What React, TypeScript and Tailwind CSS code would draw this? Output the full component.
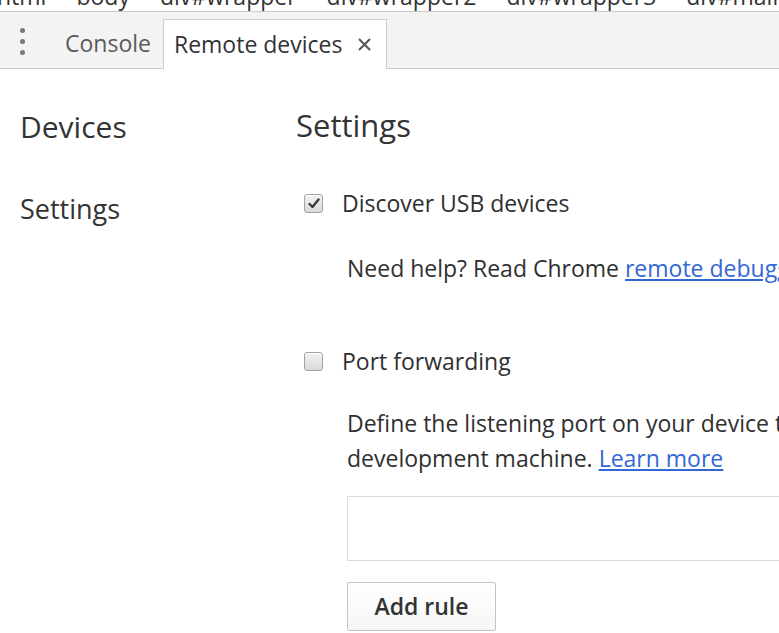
import React from 'react'

function Checkbox({ checked }: { checked?: boolean }) {
  return (
    <span className="flex h-[19px] w-[19px] shrink-0 items-center justify-center rounded-[3px] border border-[#a2a2a2] bg-gradient-to-b from-[#f2f2f2] to-[#dadada] shadow-[inset_0_1px_0_#fff]">
      {checked && (
        <svg width="12" height="11" viewBox="0 0 12 11">
          <path d="M1.5 6 L4.5 9 L10.5 1.5" fill="none" stroke="#3c3c3c" strokeWidth="2.4" strokeLinecap="round" strokeLinejoin="round" />
        </svg>
      )}
    </span>
  )
}

const crumbs = ['html', 'body', 'div#wrapper', 'div#wrapper2', 'div#wrapper3', 'div#main']

export default function App() {
  return (
    <div className="h-[633px] w-[779px] overflow-hidden bg-white font-['Open_Sans','Noto_Sans',sans-serif] text-[#303030]">
      {/* breadcrumb strip, mostly scrolled out of view */}
      <div className="h-[12px] overflow-hidden border-b border-[#c8c8c8]">
        <div className="-ml-[3px] -mt-[15px] flex gap-[30px] whitespace-nowrap text-[23px] leading-[23px] text-[#333]">
          {crumbs.map((c) => (
            <span key={c}>{c}</span>
          ))}
        </div>
      </div>

      {/* tab strip */}
      <div className="flex h-[57px] items-end border-b border-[#cdcdcd] bg-[#f3f3f3]">
        <div className="flex h-full w-[44px] flex-col items-center justify-center gap-[6px] pt-[2px]">
          <span className="h-[5px] w-[5px] rounded-full bg-[#7a7a7a]" />
          <span className="h-[5px] w-[5px] rounded-full bg-[#7a7a7a]" />
          <span className="h-[5px] w-[5px] rounded-full bg-[#7a7a7a]" />
        </div>
        <div className="flex h-[49px] items-center pl-[21px] pr-[12px] text-[23px] text-[#5a5a5a]">Console</div>
        <div className="-mb-px flex h-[50px] w-[224px] items-center border border-b-0 border-[#cdcdcd] bg-white pl-[10px] text-[23px] text-[#333]">
          <span>Remote devices</span>
          <svg className="ml-[15px]" width="15" height="15" viewBox="0 0 15 15">
            <path d="M2 2 L13 13 M13 2 L2 13" stroke="#555" strokeWidth="2" />
          </svg>
        </div>
      </div>

      {/* body */}
      <div className="grid grid-cols-[296px_1fr]">
        <div className="pl-[20px] pt-[40px]">
          <div className="text-[30px] leading-[36px] text-[#333]">Devices</div>
          <div className="mt-[46px] text-[27px] leading-[36px] text-[#333]">Settings</div>
        </div>

        <div className="overflow-hidden pt-[38px]">
          <div className="text-[31px] leading-[36px] text-[#333]">Settings</div>

          <div className="mt-[43px] flex items-center pl-[8px] text-[23px] leading-[35px]">
            <Checkbox checked />
            <span className="ml-[19px]">Discover USB devices</span>
          </div>
          <div className="mt-[30px] whitespace-nowrap pl-[51px] text-[23px] leading-[35px]">
            Need help? Read Chrome{' '}
            <a className="text-[#3367d6] underline">remote debugging documentation.</a>
          </div>

          <div className="mt-[58px] flex items-center pl-[8px] text-[23px] leading-[35px]">
            <Checkbox />
            <span className="ml-[19px]">Port forwarding</span>
          </div>
          <div className="mt-[27px] whitespace-nowrap pl-[51px] text-[23px] leading-[35px]">
            Define the listening port on your device that maps to a port accessible from your
            <br />
            development machine. <a className="text-[#3367d6] underline">Learn more</a>
          </div>

          <div className="ml-[51px] mt-[20px] h-[65px] w-[600px] border border-[#dcdcdc]" />

          <button className="ml-[51px] mt-[21px] h-[49px] w-[149px] rounded-[2px] border border-[#c4c4c4] bg-gradient-to-b from-white to-[#f6f6f6] text-[23px] font-semibold text-[#333]">
            Add rule
          </button>
        </div>
      </div>
    </div>
  )
}
